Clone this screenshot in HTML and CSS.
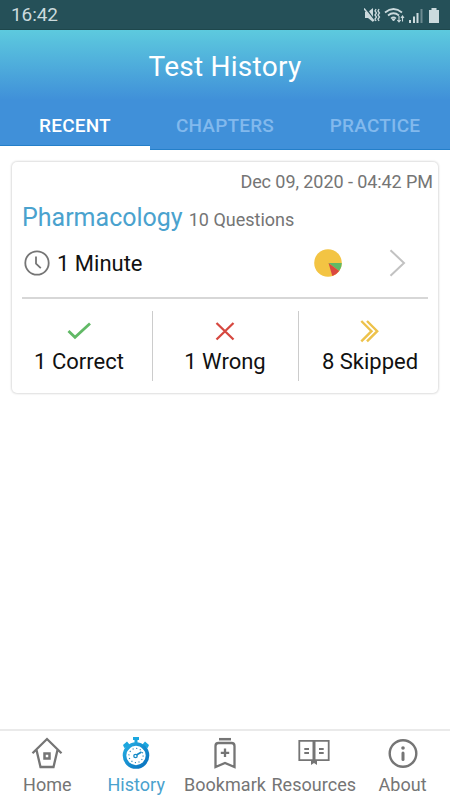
FILE: index.html
```html
<!DOCTYPE html>
<html lang="en">
<head>
<meta charset="utf-8">
<title>Test History</title>
<link rel="stylesheet" href="styles.css">
</head>
<body>
<div class="status">
  <span class="time">16:42</span>
  <svg class="status-icons" width="76" height="18" viewBox="0 0 76 18" fill="none" stroke="#cbdadd">
    <path d="M1 6h3l5-4v14l-5-4H1z" fill="#cbdadd" stroke="none"/>
    <path d="M1.500 1.500l9 13" stroke="#255058" stroke-width="1.500"/>
    <path d="M0 2.500l10 12.500" stroke-width="1.500"/>
    <path d="M12 3l-1 2 1.500 2-1.500 2 1.500 2-1.500 2 1 2M15 3l-1 2 1.500 2-1.500 2 1.500 2-1.500 2 1 2" stroke-width="1.300"/>
    <path d="M21 6.500q8.500-7 17 0M24 9.500q5.500-4.500 11 0M27 12.500q2.500-2.400 5 0" stroke-width="1.700"/>
    <path d="M28 13h3l-1.500 2z" fill="#cbdadd"/>
    <path d="M35 10v6m-1.700-2l1.700 2 1.700-2M38.500 15.500V10m-1.500 2l1.500-2 1.500 2" stroke-width="1.100"/>
    <path d="M46 14v3M50 10.500V17M53.500 7v10" stroke-width="2"/>
    <path d="M57.500 3v14" stroke="#6d8a90" stroke-width="2"/>
    <path d="M65 4h2.500V2h5v2H75v13H65z" fill="#cbdadd" stroke="none"/>
  </svg>
</div>
<header class="header">
  <h1 class="title"><span>Test History</span></h1>
  <nav class="tabs">
    <div class="tab tab-active"><span>RECENT</span></div>
    <div class="tab"><span>CHAPTERS</span></div>
    <div class="tab"><span>PRACTICE</span></div>
  </nav>
</header>
<main class="content">
  <section class="card">
    <div class="date">Dec 09, 2020 - 04:42 PM</div>
    <div class="subject"><span class="name">Pharmacology</span><span class="count">10 Questions</span></div>
    <div class="duration">
      <svg width="26" height="26" viewBox="0 0 26 26" fill="none" stroke="#757575" stroke-width="1.800">
        <circle cx="13" cy="13" r="11.700"/>
        <path d="M12 6.500v7.200l4.800 4.500"/>
      </svg>
      <span class="minutes">1 Minute</span>
      <svg class="pie" width="28" height="28" viewBox="0 0 28 28">
        <circle cx="14" cy="14" r="13.800" fill="#f3c443"/>
        <path d="M14.500 14H27.800a13.800 13.800 0 0 1-2.600 8.100z" fill="#60b966"/>
        <path d="M14.500 14l10.700 8.100a13.800 13.800 0 0 1-6.900 5z" fill="#db4840"/>
      </svg>
      <svg class="chevron" width="17" height="28" viewBox="0 0 17 28" fill="none" stroke="#c2c2c2" stroke-width="2">
        <path d="M1.500 1.200L15 14 1.500 26.800"/>
      </svg>
    </div>
    <div class="results">
      <div class="result">
        <svg width="26" height="24" viewBox="0 0 26 24" fill="none" stroke="#61b966" stroke-width="2.800"><path d="M2.500 12l6.500 6.300L24 4.500"/></svg>
        <span>1 Correct</span>
      </div>
      <div class="result">
        <svg width="26" height="24" viewBox="0 0 26 24" fill="none" stroke="#d64840" stroke-width="2.300"><path d="M4.500 4l17 16.500M21.500 4l-17 16.500"/></svg>
        <span>1 Wrong</span>
      </div>
      <div class="result">
        <svg width="26" height="24" viewBox="0 0 26 24" fill="none" stroke="#edc24b" stroke-width="2.400"><path d="M4.300 2l10.200 10.200L4.300 22.400M10 2l10.200 10.200L10 22.400"/></svg>
        <span>8 Skipped</span>
      </div>
    </div>
  </section>
</main>
<footer class="nav">
  <div class="item">
    <svg width="34" height="34" viewBox="0 0 34 34" fill="none" stroke="#757575" stroke-width="2.300">
      <path d="M2.500 17.300L17 3l14.500 14.300M6.500 14l4 17h13l4-17"/>
      <rect x="14.500" y="17.500" width="5" height="5" stroke-width="2.500"/>
    </svg>
    <span>Home</span>
  </div>
  <div class="item item-active">
    <svg width="34" height="34" viewBox="0 0 34 34" fill="none">
      <defs><linearGradient id="blue" x1="0" y1="0" x2="1" y2="1"><stop offset="0" stop-color="#25ade2"/><stop offset="1" stop-color="#0870bd"/></linearGradient></defs>
      <path d="M14 1h6v3h-1.500v4h-3V4H14zM4 9l4-3.500 2.500 3-1.500 1.500L11 12l-2 2-2.500-2.500-1.200.5zM30 9l-4-3.500-2.500 3L25 10l-2 2 2 2 2.500-2.500 1.200.5z" fill="#1ba7df"/>
      <circle cx="17" cy="19.500" r="11.500" stroke="url(#blue)" stroke-width="3.600"/>
      <circle cx="17" cy="19.500" r="7.100" stroke="#2485b9" stroke-width="1.200" stroke-dasharray="1.100 2.617"/>
      <circle cx="16.500" cy="20" r="1.700" stroke="#1689c6" stroke-width="1.300"/>
      <path d="M17.500 19l5-3" stroke="#1689c6" stroke-width="1.700"/>
    </svg>
    <span>History</span>
  </div>
  <div class="item">
    <svg width="34" height="34" viewBox="0 0 34 34" fill="none" stroke="#757575" stroke-width="2.300">
      <path d="M11 3.200h12" stroke-width="2.500"/>
      <path d="M7.500 31V10q0-3 3-3h13q3 0 3 3v21L17 27zM17 12.500v8.500M12.800 16.800h8.400"/>
    </svg>
    <span>Bookmark</span>
  </div>
  <div class="item">
    <svg width="34" height="34" viewBox="0 0 34 34" fill="none" stroke="#757575" stroke-width="1.800">
      <path d="M2.300 4.800h29.400v19.400H2.300zM7.300 13h4.700M7.300 17h4.700M22 13h4.700M22 17h4.700"/>
      <path d="M17 5v20" stroke-width="3"/>
      <path d="M14 24h6v5l-3-2-3 2z" fill="#757575" stroke="none"/>
    </svg>
    <span>Resources</span>
  </div>
  <div class="item">
    <svg width="34" height="34" viewBox="0 0 34 34" fill="none" stroke="#757575" stroke-width="2.400">
      <circle cx="17" cy="17.500" r="13.300"/>
      <circle cx="17" cy="12" r="1.800" fill="#757575" stroke="none"/>
      <path d="M17 17v6.500" stroke-width="3" stroke-linecap="round"/>
    </svg>
    <span>About</span>
  </div>
</footer>
</body>
</html>
```

FILE: styles.css
```css
* { box-sizing: border-box; }
body {
  margin: 0;
  width: 450px;
  height: 800px;
  display: flex;
  flex-direction: column;
  overflow: hidden;
  background: #fff;
  font-family: Roboto, "Liberation Sans", sans-serif;
  color: #111;
}
svg { display: block; flex: none; }
.status {
  height: 30px;
  flex: none;
  display: flex;
  align-items: center;
  justify-content: space-between;
  padding: 0 10px 0 11px;
  background: #255058;
  border-bottom: 1px solid #1e474c;
  color: #cbdadd;
}
.time { font-size: 19px; line-height: 30px; letter-spacing: -0.1px; }
.header {
  height: 120px;
  flex: none;
  display: flex;
  flex-direction: column;
  background: linear-gradient(#5dcade 0, #4090d9 70px);
  border-bottom: 1px solid #247fc9;
}
.title {
  margin: 0;
  height: 68px;
  padding-top: 3px;
  line-height: 67px;
  text-align: center;
  font-size: 28px;
  font-weight: 400;
  letter-spacing: 0.25px;
  color: #fff;
}
.tabs { flex: 1; display: grid; grid-template-columns: repeat(3, 1fr); margin-bottom: -1px; }
.tab {
  display: flex;
  justify-content: center;
  line-height: 56px;
  font-size: 19px;
  font-weight: 500;
  letter-spacing: 0.2px;
  color: #82b9ed;
  height: 51px;
}
.tab-active {
  height: 52px;
  color: #fff;
  border-bottom: 4px solid #fff;
  box-shadow: inset 0 -1px #247fc9;
}
.content { flex: 1; padding: 12px 12px 0; }
.card {
  height: 231px;
  padding: 0 10px;
  border-radius: 5px;
  box-shadow: 0 0 2px 1px #dedede;
}
.date {
  height: 36px;
  margin-right: -5px;
  padding-top: 7px;
  line-height: 26px;
  text-align: right;
  font-size: 18px;
  letter-spacing: -0.07px;
  color: #757575;
}
.subject { height: 39px; display: flex; align-items: baseline; line-height: 40px; }
.name { font-size: 25px; color: #4aa2ce; }
.count { margin-left: 6px; font-size: 18px; color: #757575; }
.duration {
  height: 62px;
  display: flex;
  align-items: center;
  border-bottom: 2px solid #d7d7d7;
  padding: 0 22px 8px 2px;
}
.minutes { margin-left: 7px; font-size: 22px; }
.pie { margin-left: auto; }
.chevron { margin-left: 47px; }
.results {
  display: grid;
  grid-template-columns: 146px 146px 144px;
  height: 70px;
  margin: 12px -14px 0 -16px;
}
.result { display: flex; flex-direction: column; align-items: center; padding-top: 8px; }
.result + .result { border-left: 1px solid #ccc; padding-right: 1px; }
.result span { margin-top: 5px; font-size: 22px; line-height: 28px; white-space: nowrap; }
.nav {
  height: 71px;
  flex: none;
  display: grid;
  grid-template-columns: repeat(5, 88.8px);
  justify-content: center;
  padding-top: 5px;
  border-top: 2px solid #eaeaea;
}
.item { display: flex; flex-direction: column; align-items: center; color: #757575; }
.item span { margin-top: 4px; line-height: 21px; font-size: 18px; white-space: nowrap; letter-spacing: 0.05px; }
.item-active { color: #4aa2ce; }
```
